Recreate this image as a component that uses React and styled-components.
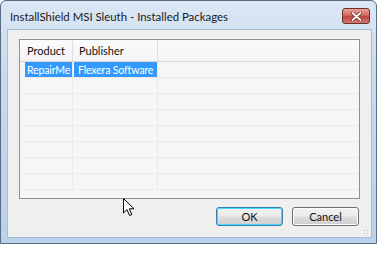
import styled, { createGlobalStyle } from 'styled-components';

const Global = createGlobalStyle`
  html, body { margin: 0; padding: 0; background: #fff; }
  body { font-family: Lato, "Liberation Sans", sans-serif; }
`;

const Window = styled.div`
  position: relative;
  width: 375px;
  height: 242px;
  border: 1px solid #5b6c82;
  border-radius: 6px 6px 0 0;
  background: linear-gradient(to bottom, #dbe7f4 0%, #c8daee 30%, #b9d1ea 100%);
  display: flex;
  flex-direction: column;
`;

const TitleBar = styled.div`
  height: 28px;
  display: flex;
  align-items: center;
  justify-content: space-between;
  padding: 0 6px 0 9px;
`;

const Caption = styled.span`
  font-size: 11.4px;
  color: #1a1a1a;
  margin-top: 3px;
`;

const CloseButton = styled.div`
  width: 26px;
  height: 14px;
  margin-top: 2px;
  border: 1px solid #6d2e2e;
  border-radius: 3px;
  background: linear-gradient(to bottom, #e7a29a 0%, #d0685f 45%, #c0443a 55%, #d07b6f 100%);
  display: flex;
  align-items: center;
  justify-content: center;
`;

const Client = styled.div`
  flex: 1;
  margin: 0 4px 5px 6px;
  background: #f0efef;
  border: 1px solid #a7bdd6;
  padding: 9px 11px 0 11px;
  display: flex;
  flex-direction: column;
  position: relative;
`;

const ListView = styled.div`
  height: 158px;
  border: 1px solid #8e9095;
  background: #f7f6f7;
  display: flex;
  flex-direction: column;
  overflow: hidden;
`;

const HeaderRow = styled.div`
  height: 21px;
  display: flex;
  background: linear-gradient(to bottom, #fbfbfb, #f4f4f5);
  border-bottom: 1px solid #d6d7da;
`;

const HeaderCell = styled.div`
  width: ${p => p.w}px;
  flex: ${p => (p.w ? 'none' : 1)};
  border-right: ${p => (p.w ? '1px solid #dddfe2' : 'none')};
  font-size: 11px;
  color: #111;
  display: flex;
  align-items: center;
  padding-left: ${p => p.pad}px;
  box-sizing: border-box;
`;

const Row = styled.div`
  height: 16px;
  display: flex;
  border-bottom: 1px solid #ebebeb;
  box-sizing: border-box;
`;

const Cell = styled.div`
  width: ${p => p.w}px;
  flex: ${p => (p.w ? 'none' : 1)};
  box-sizing: border-box;
  border-right: ${p => (p.w ? '1px solid #ebebeb' : 'none')};
  display: flex;
  align-items: center;
  font-size: 10.5px;
  letter-spacing: -0.15px;
  color: #fff;
  padding-left: ${p => p.pad || 0}px;
`;

const Selection = styled.div`
  flex: 1;
  height: 100%;
  background: ${p => (p.on ? '#3399ff' : 'transparent')};
  display: flex;
  align-items: center;
  padding-left: ${p => p.pad}px;
  white-space: nowrap;
  overflow: hidden;
`;

const Buttons = styled.div`
  display: flex;
  justify-content: flex-end;
  gap: 9px;
  margin-top: 8px;
  padding-right: 1px;
`;

const Button = styled.div`
  width: 65px;
  height: 17px;
  border: 1px solid ${p => (p.primary ? '#3c7fb1' : '#707070')};
  border-radius: 3px;
  background: linear-gradient(to bottom, #f2f2f2 0%, #ebebeb 48%, #dddddd 52%, #cfcfcf 100%);
  box-shadow: ${p => (p.primary ? 'inset 0 0 0 1px #48d8fb' : 'inset 0 0 0 1px #fcfcfc')};
  display: flex;
  align-items: center;
  justify-content: center;
  font-size: 11px;
  color: #111;
`;

const Grip = styled.div`
  position: absolute;
  right: 1px;
  bottom: 1px;
  width: 7px;
  height: 7px;
  background-image: radial-gradient(circle, #b8b8b8 0.8px, transparent 1px);
  background-size: 3px 3px;
`;

const Cursor = styled.svg`
  position: absolute;
  left: 122px;
  top: 197px;
`;

const cols = [53, 85];

export default function App() {
  const emptyRows = Array.from({ length: 7 });
  return (
    <>
      <Global />
      <Window>
        <TitleBar>
          <Caption>InstallShield MSI Sleuth - Installed Packages</Caption>
          <CloseButton>
            <svg width="11" height="9" viewBox="0 0 11 9">
              <path d="M1.5 1 L9.5 8 M9.5 1 L1.5 8" stroke="#5a2020" strokeWidth="3" strokeLinecap="round" />
              <path d="M1.5 1 L9.5 8 M9.5 1 L1.5 8" stroke="#fff" strokeWidth="1.8" strokeLinecap="round" />
            </svg>
          </CloseButton>
        </TitleBar>
        <Client>
          <ListView>
            <HeaderRow>
              <HeaderCell w={cols[0]} pad={7}>Product</HeaderCell>
              <HeaderCell w={cols[1]} pad={6}>Publisher</HeaderCell>
              <HeaderCell />
            </HeaderRow>
            <Row>
              <Cell w={cols[0]} pad={5}><Selection on pad={2}>RepairMe</Selection></Cell>
              <Cell w={cols[1]} pad={1}><Selection on pad={4}>Flexera Software</Selection></Cell>
              <Cell />
            </Row>
            {emptyRows.map((_, i) => (
              <Row key={i}>
                <Cell w={cols[0]} />
                <Cell w={cols[1]} />
                <Cell />
              </Row>
            ))}
          </ListView>
          <Buttons>
            <Button primary>OK</Button>
            <Button>Cancel</Button>
          </Buttons>
          <Grip />
        </Client>
        <Cursor width="13" height="19" viewBox="0 0 13 19">
          <path d="M0.5 0.5 L0.5 15 L4 11.6 L6.6 17.5 L8.8 16.5 L6.3 10.8 L11 10.8 Z" fill="#fff" stroke="#000" strokeWidth="1" strokeLinejoin="round" />
        </Cursor>
      </Window>
    </>
  );
}
